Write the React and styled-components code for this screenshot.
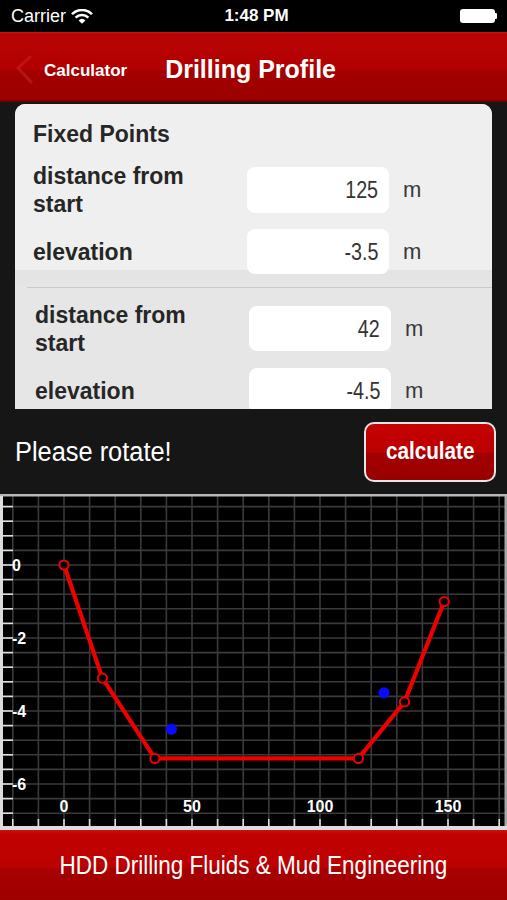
import styled, { createGlobalStyle } from "styled-components";

const GlobalStyle = createGlobalStyle`
  html, body {
    margin: 0;
    padding: 0;
    background: #161616;
  }
  body {
    font-family: "Liberation Sans", Arial, sans-serif;
  }
`;

// no condensed face is installed, so narrow text is squeezed horizontally
const Squeeze = styled.span`
  display: inline-block;
  white-space: nowrap;
  transform: scaleX(${(p) => p.$s});
  transform-origin: ${(p) => p.$o || "center"};
`;

const Screen = styled.div`
  width: 507px;
  height: 900px;
  display: flex;
  flex-direction: column;
  overflow: hidden;
  background: #161616;
`;

const StatusBar = styled.div`
  height: 32px;
  flex: none;
  background: #000;
  color: #fff;
  display: grid;
  grid-template-columns: 1fr auto 1fr;
  align-items: center;
  padding: 0 10px 0 11px;
  font-size: 18px;
`;

const Carrier = styled.div`
  display: flex;
  align-items: center;
  gap: 4px;
`;

const Clock = styled.div`
  font-size: 17px;
  font-weight: 600;
  padding-left: 5px;
`;

const Battery = styled.div`
  justify-self: end;
  display: flex;
  align-items: center;
  .body {
    width: 35px;
    height: 14px;
    border-radius: 3px;
    background: #fff;
  }
  .nub {
    width: 2px;
    height: 6px;
    background: #fff;
    border-radius: 0 1px 1px 0;
  }
`;

const NavBar = styled.div`
  height: 70px;
  flex: none;
  display: flex;
  align-items: center;
  padding: 4px 0 0 15px;
  box-sizing: border-box;
  color: #fff;
  background: linear-gradient(
    #c51616 0,
    #b80404 3%,
    #b20000 52%,
    #a40000 55%,
    #9c0000 96%,
    #600000 100%
  );
`;

const BackLabel = styled.span`
  margin-left: 11px;
  font-size: 17px;
  font-weight: 700;
  padding-top: 3px;
`;

const NavTitle = styled.h1`
  margin: 0 0 0 38px;
  font-size: 25px;
  font-weight: 700;
`;

const Content = styled.div`
  padding: 2px 15px 0;
  flex: none;
`;

const ScrollArea = styled.div`
  height: 305px;
  overflow: hidden;
  border-radius: 10px 10px 0 0;
  background: #e6e6e6;
  color: #262626;
`;

const Section = styled.div`
  padding: ${(p) => (p.$first ? "18px 0 13px 18px" : "18px 0 0 20px")};
  background: ${(p) =>
    p.$first
      ? "linear-gradient(#efefef 0, #efefef 166px, #e3e3e3 166px, #e6e6e6 100%)"
      : "#e6e6e6"};
  display: flex;
  flex-direction: column;
  gap: ${(p) => (p.$first ? 16 : 17)}px;
`;

const SectionTitle = styled.div`
  font-size: 23px;
  font-weight: 700;
  line-height: 24px;
  margin-bottom: 5px;
`;

const Separator = styled.div`
  height: 1px;
  margin-left: 12px;
  background: #cacaca;
`;

const Row = styled.div`
  display: grid;
  grid-template-columns: 214px 142px auto;
  grid-template-rows: ${(p) => p.$h}px;
  align-items: center;
  height: ${(p) => p.$h}px;
`;

const Label = styled.div`
  font-size: 23px;
  font-weight: 700;
  line-height: 28px;
`;

const ValueBox = styled.div`
  align-self: stretch;
  background: #fff;
  border-radius: 8px;
  display: flex;
  align-items: center;
  justify-content: flex-end;
  padding-right: 11px;
  font-size: 24px;
  color: #333;
`;

const Unit = styled.span`
  margin-left: 14px;
  font-size: 22px;
  color: #3a3a3a;
`;

const ActionRow = styled.div`
  height: 85px;
  flex: none;
  box-sizing: border-box;
  padding: 13px 11px 12px 15px;
  display: flex;
  align-items: center;
  justify-content: space-between;
`;

const Hint = styled.span`
  font-size: 27px;
  color: #fff;
`;

const CalcButton = styled.button`
  width: 132px;
  height: 60px;
  border: 2px solid #e6e6e6;
  border-radius: 10px;
  color: #fff;
  font-family: "Liberation Sans", Arial, sans-serif;
  font-weight: 700;
  font-size: 23px;
  background: linear-gradient(#c60202 0, #bb0000 50%, #a20000 52%, #9a0000 100%);
  padding: 0 0 2px;
`;

const ChartSvg = styled.svg`
  display: block;
  flex: none;
  background: #000;
`;

const Footer = styled.div`
  height: 70px;
  flex: none;
  display: flex;
  align-items: center;
  justify-content: center;
  color: #fff;
  font-size: 25px;
  background: linear-gradient(
    #d01010 0,
    #c20202 6%,
    #bb0000 53%,
    #a80000 55%,
    #9e0000 100%
  );
`;

function Wifi() {
  return (
    <svg width="24" height="15" viewBox="0 0 24 15">
      <g fill="none" stroke="#fff" strokeWidth="2.6" strokeLinecap="butt">
        <path d="M2 5.2 A14 14 0 0 1 22 5.2" />
        <path d="M5.6 8.6 A9 9 0 0 1 18.4 8.6" />
      </g>
      <path d="M8.6 11.4 A5 5 0 0 1 15.4 11.4 L12 14.8 Z" fill="#fff" />
    </svg>
  );
}

function BackChevron() {
  return (
    <svg width="18" height="30" viewBox="0 0 18 30">
      <polyline
        points="16,2 3,14 17,29"
        fill="none"
        stroke="#d43838"
        strokeOpacity="0.35"
        strokeWidth="3"
      />
    </svg>
  );
}

const W = 507;
const H = 336;
const X0 = 64;
const XS = 2.56;
const Y0 = 71;
const YS = 36.5;
const px = (x) => X0 + XS * x;
const py = (y) => Y0 - YS * y;

const vLines = [];
for (let k = -2; k <= 17; k++) vLines.push(X0 + k * 25.6);
const hLines = [];
for (let k = -4; k <= 17; k++) hLines.push(Y0 + k * 14.6);

const profile = [
  [0, 0],
  [15, -3.1],
  [35.5, -5.3],
  [115, -5.3],
  [133, -3.75],
  [148.5, -1],
];
const fixedPoints = [
  [42, -4.5],
  [125, -3.5],
];

function Chart() {
  const labelFont = { fontFamily: "Liberation Sans, Arial, sans-serif", fontWeight: 700, fontSize: 16 };
  return (
    <ChartSvg width={W} height={H} viewBox={`0 0 ${W} ${H}`}>
      <g stroke="#3a3a3a" strokeWidth="1.6">
        {vLines.map((x) => (
          <line key={"v" + x} x1={x} y1={2} x2={x} y2={332} />
        ))}
        {hLines.map((y) => (
          <line key={"h" + y} x1={3} y1={y} x2={505} y2={y} />
        ))}
      </g>
      <g stroke="#e0e0e0" strokeWidth="1.6">
        {hLines.map((y) => (
          <line key={"lt" + y} x1={2} y1={y} x2={13} y2={y} />
        ))}
        {vLines.map((x) => (
          <line key={"bt" + x} x1={x} y1={325} x2={x} y2={332} />
        ))}
      </g>
      <rect x="0" y="0" width={W} height="2.5" fill="#b8b8b8" />
      <rect x="0" y="2" width="3" height={H} fill="#dcdcdc" />
      <rect x="504.5" y="2" width="2.5" height={H} fill="#a8a8a8" />
      <rect x="0" y="332" width={W} height="4" fill="#dcdcdc" />
      <g fill="#fff" style={labelFont}>
        {[0, -2, -4, -6].map((v) => (
          <text key={"yl" + v} x={12} y={py(v) + 5.5}>
            {v}
          </text>
        ))}
        {[0, 50, 100, 150].map((v) => (
          <text key={"xl" + v} x={px(v)} y={317.5} textAnchor="middle">
            {v}
          </text>
        ))}
      </g>
      <polyline
        points={profile.map(([x, y]) => `${px(x)},${py(y)}`).join(" ")}
        fill="none"
        stroke="#ec0000"
        strokeWidth="4.2"
        strokeLinejoin="round"
      />
      {profile.map(([x, y]) => (
        <circle key={"p" + x} cx={px(x)} cy={py(y)} r="4.6" fill="#000" stroke="#f00000" strokeWidth="2" />
      ))}
      {fixedPoints.map(([x, y]) => (
        <circle key={"f" + x} cx={px(x)} cy={py(y)} r="5.5" fill="#0a0aff" />
      ))}
    </ChartSvg>
  );
}

function Value({ children }) {
  return (
    <ValueBox>
      <Squeeze $s={0.82} $o="right">
        {children}
      </Squeeze>
    </ValueBox>
  );
}

export default function App() {
  return (
    <Screen>
      <GlobalStyle />
      <StatusBar>
        <Carrier>
          Carrier
          <Wifi />
        </Carrier>
        <Clock>1:48 PM</Clock>
        <Battery>
          <div className="body" />
          <div className="nub" />
        </Battery>
      </StatusBar>
      <NavBar>
        <BackChevron />
        <BackLabel>Calculator</BackLabel>
        <NavTitle>Drilling Profile</NavTitle>
      </NavBar>
      <Content>
        <ScrollArea>
          <Section $first>
            <SectionTitle>Fixed Points</SectionTitle>
            <Row $h={46}>
              <Label>
                distance from
                <br />
                start
              </Label>
              <Value>125</Value>
              <Unit>m</Unit>
            </Row>
            <Row $h={45}>
              <Label>elevation</Label>
              <Value>-3.5</Value>
              <Unit>m</Unit>
            </Row>
          </Section>
          <Separator />
          <Section>
            <Row $h={45}>
              <Label>
                distance from
                <br />
                start
              </Label>
              <Value>42</Value>
              <Unit>m</Unit>
            </Row>
            <Row $h={45}>
              <Label>elevation</Label>
              <Value>-4.5</Value>
              <Unit>m</Unit>
            </Row>
          </Section>
        </ScrollArea>
      </Content>
      <ActionRow>
        <Hint>
          <Squeeze $s={0.94} $o="left">
            Please rotate!
          </Squeeze>
        </Hint>
        <CalcButton>
          <Squeeze $s={0.9}>calculate</Squeeze>
        </CalcButton>
      </ActionRow>
      <Chart />
      <Footer>
        <Squeeze $s={0.9}>HDD Drilling Fluids &amp; Mud Engineering</Squeeze>
      </Footer>
    </Screen>
  );
}
